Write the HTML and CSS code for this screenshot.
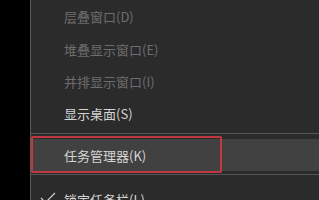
FILE: index.html
```html
<!DOCTYPE html>
<html lang="zh">
<head>
<meta charset="utf-8">
<link rel="stylesheet" href="styles.css">
</head>
<body>
<div class="screen">
  <div class="menu">
    <div class="item disabled first">层叠窗口(D)</div>
    <div class="item disabled">堆叠显示窗口(E)</div>
    <div class="item disabled">并排显示窗口(I)</div>
    <div class="item">显示桌面(S)</div>
    <div class="sep sep1"></div>
    <div class="item hl">任务管理器(K)<span class="mark"></span></div>
    <div class="sep sep2"></div>
    <div class="item last"><svg class="check" width="16" height="12" viewBox="0 0 16 12"><polyline points="1,6 5.5,10.5 15,1" fill="none" stroke="#cfcfcf" stroke-width="1.2"/></svg>锁定任务栏(L)</div>
  </div>
</div>
</body>
</html>
```
FILE: styles.css
```css
html, body {
  margin: 0;
  padding: 0;
  background: #000;
}
.screen {
  width: 319px;
  height: 200px;
  overflow: hidden;
  display: flex;
  padding-left: 30px;
  box-sizing: border-box;
}
.menu {
  flex: 1;
  background: #2b2b2b;
  border-left: 1px solid #5a5a5a;
  display: flex;
  flex-direction: column;
  font-family: "Noto Sans CJK SC", "Liberation Sans", sans-serif;
  font-size: 13px;
  color: #d4d4d4;
}
.item {
  position: relative;
  height: 32px;
  flex: none;
  display: flex;
  align-items: center;
  padding-left: 33px;
}
.item.first {
  height: 33px;
}
.item.disabled {
  color: #6d6d6d;
}
.sep {
  flex: none;
  height: 1px;
  background: #555;
}
.sep1 {
  margin: 4px 0 5px;
}
.sep2 {
  margin: 3px 0 3px;
}
.hl {
  background: #414141;
  height: 32px;
}
.mark {
  position: absolute;
  left: 0;
  top: -3px;
  width: 187px;
  height: 33px;
  border: 2px solid #c23842;
  border-radius: 2px;
}
.item.last {
  box-sizing: border-box;
  padding-top: 10px;
}
.check {
  position: absolute;
  left: 9px;
  top: 14px;
}
```
